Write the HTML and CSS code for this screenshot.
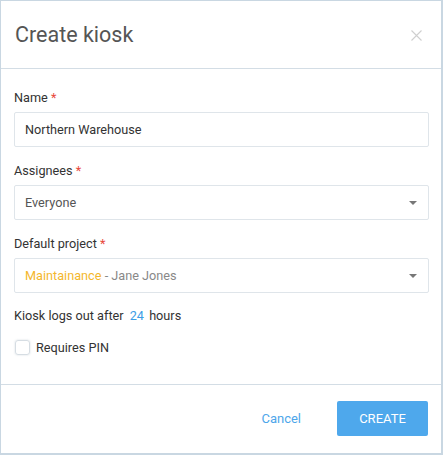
FILE: index.html
```html
<!DOCTYPE html>
<html>
<head>
<meta charset="utf-8">
<link rel="stylesheet" href="styles.css">
</head>
<body>
<div class="modal">
  <div class="modal-header">
    <h1 class="title">Create kiosk</h1>
    <svg class="close" width="11" height="11" viewBox="0 0 11 11"><path d="M0.5 0.5 L10.5 10.5 M10.5 0.5 L0.5 10.5" stroke="#cfcfcf" stroke-width="1.1" fill="none"/></svg>
  </div>
  <div class="modal-body">
    <div class="field">
      <label class="label">Name <span class="req">*</span></label>
      <div class="input">Northern Warehouse</div>
    </div>
    <div class="field">
      <label class="label">Assignees <span class="req">*</span></label>
      <div class="input select"><span class="muted">Everyone</span><span class="caret"></span></div>
    </div>
    <div class="field">
      <label class="label">Default project <span class="req">*</span></label>
      <div class="input select"><span><span class="project">Maintainance</span><span class="owner"> - Jane Jones</span></span><span class="caret"></span></div>
    </div>
    <div class="logout">Kiosk logs out after <span class="hours">24</span> hours</div>
    <div class="check-row"><span class="checkbox"></span><span class="check-label">Requires PIN</span></div>
  </div>
  <div class="modal-footer">
    <button class="btn-link">Cancel</button>
    <button class="btn-primary">CREATE</button>
  </div>
</div>
</body>
</html>
```

FILE: styles.css
```css
* { box-sizing: border-box; }
html, body { margin: 0; padding: 0; background: #fff; }
body { font-family: Roboto, "Liberation Sans", sans-serif; color: #333; }
.modal {
  width: 443px;
  height: 455px;
  border: 1px solid #c9d7e2;
  border-right-width: 2px;
  border-bottom-width: 2px;
  display: flex;
  flex-direction: column;
  background: #fff;
}
.modal-header {
  height: 68px;
  border-bottom: 1px solid #d3dde5;
  display: flex;
  align-items: center;
  justify-content: space-between;
  padding: 0 19px 0 14px;
}
.title {
  margin: 0;
  font-size: 21.5px;
  font-weight: 400;
  color: #555;
  padding-bottom: 1px;
}
.close { display: block; margin-top: 1px; }
.modal-body {
  flex: 1;
  padding: 19px 12px 0 13px;
}
.field { margin-bottom: 14px; }
.label {
  display: block;
  font-size: 12.7px;
  line-height: 20px;
  color: #333;
  margin-bottom: 4px;
}
.req { color: #e8483b; }
.input {
  height: 35px;
  border: 1px solid #dfe5ea;
  border-radius: 2px;
  padding: 0 10px;
  display: flex;
  align-items: center;
  font-size: 12.7px;
  color: #333;
}
.select { justify-content: space-between; padding-right: 10px; }
.muted { color: #555; }
.project { color: #f4b72c; }
.owner { color: #888; }
.caret {
  width: 0; height: 0;
  border-left: 4px solid transparent;
  border-right: 4px solid transparent;
  border-top: 4px solid #777;
  margin-right: 1px;
}
.logout {
  font-size: 12.7px;
  line-height: 20px;
  color: #333;
  margin-top: -1px;
}
.hours { color: #3d9de6; margin: 0 2px 0 3px; }
.check-row {
  display: flex;
  align-items: center;
  margin-top: 14px;
  margin-left: 1px;
}
.checkbox {
  width: 15px; height: 15px;
  border: 1px solid #d6dde3;
  border-radius: 3px;
  box-shadow: 0 0 2px rgba(120,140,160,0.35);
  margin-right: 6px;
}
.check-label { font-size: 12.7px; color: #333; }
.modal-footer {
  height: 69px;
  border-top: 1px solid #d3dde5;
  display: flex;
  align-items: center;
  justify-content: flex-end;
  padding: 0 13px 1px 0;
}
.btn-link {
  background: none;
  border: 0;
  font-family: inherit;
  font-size: 13px;
  color: #4da6ea;
  padding: 0;
  margin-right: 36px;
  cursor: pointer;
}
.btn-primary {
  width: 91px;
  height: 35px;
  background: #4ea8ec;
  color: #fff;
  border: 0;
  border-radius: 2px;
  font-family: inherit;
  font-size: 13px;
  cursor: pointer;
}
```
